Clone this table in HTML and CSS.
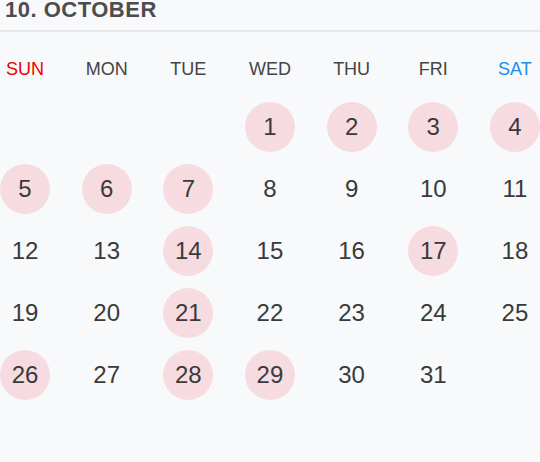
FILE: index.html
```html
<!DOCTYPE html>
<html>
<head>
<meta charset="utf-8">
<link rel="stylesheet" href="styles.css">
</head>
<body>
<div class="cal">
  <div class="title">10. OCTOBER</div>
  <div class="grid">
    <div class="dn sun">SUN</div><div class="dn">MON</div><div class="dn">TUE</div><div class="dn">WED</div><div class="dn">THU</div><div class="dn">FRI</div><div class="dn sat">SAT</div>
    <div class="d"></div><div class="d"></div><div class="d"></div><div class="d on">1</div><div class="d on">2</div><div class="d on">3</div><div class="d on">4</div>
    <div class="d on">5</div><div class="d on">6</div><div class="d on">7</div><div class="d">8</div><div class="d">9</div><div class="d">10</div><div class="d">11</div>
    <div class="d">12</div><div class="d">13</div><div class="d on">14</div><div class="d">15</div><div class="d">16</div><div class="d on">17</div><div class="d">18</div>
    <div class="d">19</div><div class="d">20</div><div class="d on">21</div><div class="d">22</div><div class="d">23</div><div class="d">24</div><div class="d">25</div>
    <div class="d on">26</div><div class="d">27</div><div class="d on">28</div><div class="d on">29</div><div class="d">30</div><div class="d">31</div><div class="d"></div>
  </div>
</div>
</body>
</html>
```
FILE: styles.css
```css
html, body {
  margin: 0;
  padding: 0;
  background: #f8f9fb;
}
.cal {
  width: 540px;
  height: 462px;
  font-family: "Liberation Sans", Arial, sans-serif;
  color: #3b3b3b;
}
.title {
  height: 32px;
  box-sizing: border-box;
  padding: 0 0 0 5px;
  font-size: 22px;
  font-weight: bold;
  line-height: 20px;
  letter-spacing: 0.5px;
  color: #4d4d4d;
  border-bottom: 2px solid #e6e7ea;
}
.grid {
  display: grid;
  grid-template-columns: repeat(7, 50px);
  justify-content: space-between;
  row-gap: 12px;
  padding-top: 16px;
}
.dn {
  height: 42px;
  text-align: center;
  font-size: 18px;
  line-height: 42px;
  color: #444;
  margin-left: -20px;
  margin-right: -20px;
}
.dn.sun { color: #ee0000; }
.dn.sat { color: #1a8cf0; }
.d {
  width: 50px;
  height: 50px;
  border-radius: 50%;
  text-align: center;
  font-size: 24px;
  line-height: 50px;
  color: #3a3a3a;
}
.d.on { background: #f6dce0; }
```
